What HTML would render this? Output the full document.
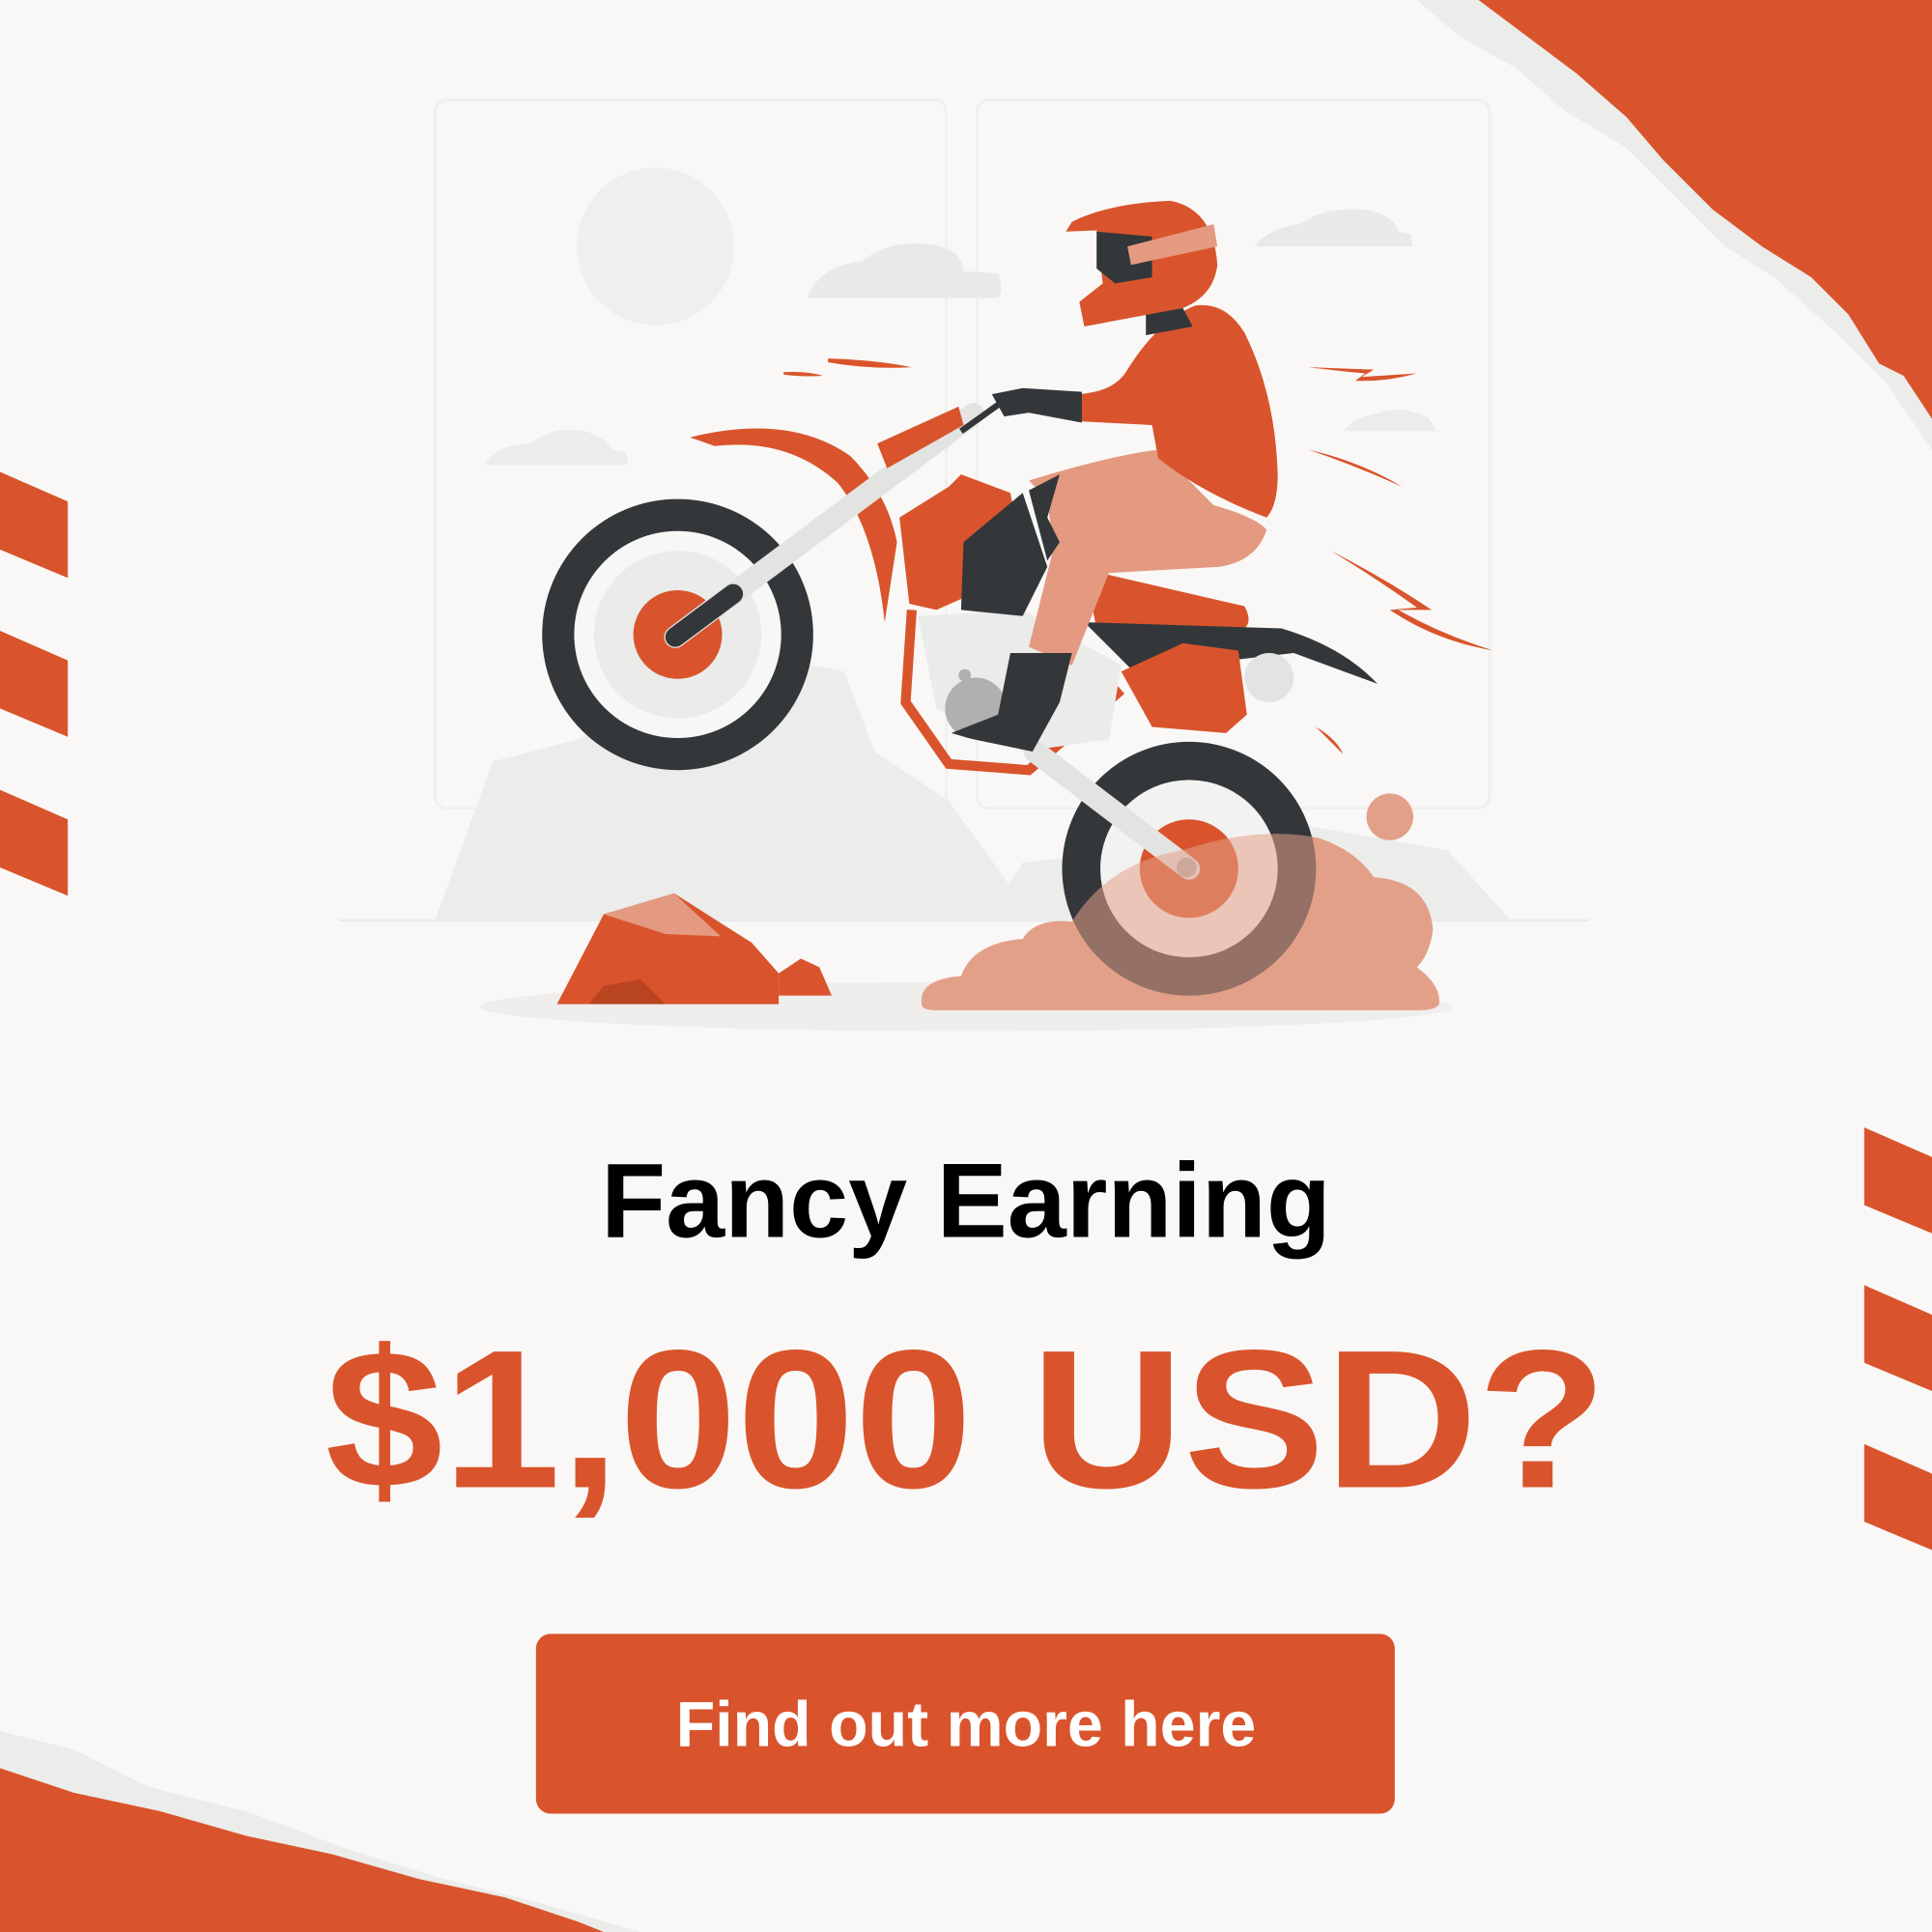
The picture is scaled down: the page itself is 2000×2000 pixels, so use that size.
<!DOCTYPE html>
<html><head><meta charset="utf-8"><style>
html,body{margin:0;padding:0;background:#f9f8f6;}
svg{display:block}
</style></head><body>
<svg width="2000" height="2000" viewBox="0 0 1568 1568" xmlns="http://www.w3.org/2000/svg">
<defs><clipPath id="wc"><circle cx="965" cy="705" r="103"/></clipPath></defs>
<rect width="1568" height="1568" fill="#f9f8f6"/>
<path d="M1150,0 L1185,30 1230,55 1270,90 1320,120 1360,160 1400,200 1440,225 1490,270 1530,310 1568,365 L1568,0Z" fill="#ececea"/>
<path d="M1200,0 L1240,30 1280,60 1320,95 1350,130 1390,170 1430,200 1470,225 1500,255 1525,295 1545,305 1568,340 L1568,0Z" fill="#d9542c"/>
<path d="M0,1405 L60,1420 120,1450 200,1470 280,1500 360,1525 440,1545 520,1568 L0,1568Z" fill="#ececea"/>
<path d="M0,1435 L60,1455 130,1470 200,1490 270,1505 340,1525 410,1540 470,1560 490,1568 L0,1568Z" fill="#d9542c"/>
<g fill="#d9542c">
<path d="M0,383 L55,407 L55,469 L0,446Z"/>
<path d="M0,512 L55,536 L55,598 L0,575Z"/>
<path d="M0,641 L55,665 L55,727 L0,704Z"/>
<path d="M1513,915 L1568,939 L1568,1001 L1513,978Z"/>
<path d="M1513,1043 L1568,1067 L1568,1129 L1513,1106Z"/>
<path d="M1513,1172 L1568,1196 L1568,1258 L1513,1235Z"/>
</g>
<rect x="353" y="81" width="415" height="575" rx="10" fill="none" stroke="#f0efed" stroke-width="2"/>
<rect x="793" y="81" width="416" height="575" rx="10" fill="none" stroke="#f0efed" stroke-width="2"/>
<circle cx="532" cy="200" r="64" fill="#efefed"/>
<path d="M655,242 Q665,215 700,212 Q720,195 750,198 Q780,200 782,220 L810,222 Q815,235 810,242Z" fill="#e9e9e8"/>
<path d="M1018,200 Q1030,185 1055,182 Q1075,168 1105,170 Q1130,172 1135,188 L1145,190 L1146,200Z" fill="#e9e9e8"/>
<path d="M393,377 Q405,360 430,360 Q450,345 475,350 Q492,355 496,365 L508,367 L510,377Z" fill="#ececea"/>
<path d="M1090,350 Q1100,338 1120,335 Q1140,328 1160,340 L1166,350Z" fill="#ececea"/>
<path d="M353,747 L400,618 L470,600 L560,520 L685,545 L710,610 L770,650 L840,747Z" fill="#ececeb"/>
<path d="M800,747 L830,700 L920,690 L1000,660 L1060,670 L1175,690 L1226,747Z" fill="#ececeb"/>
<line x1="275" y1="747" x2="1290" y2="747" stroke="#ebebea" stroke-width="2"/>
<ellipse cx="784" cy="817" rx="395" ry="20" fill="#efeeec"/>
<path d="M452,815 L490,742 L547,725 L610,765 L632,790 L632,815Z" fill="#d9542c"/>
<path d="M490,742 L547,725 L585,760 L540,758Z" fill="#e49a80"/>
<path d="M632,790 L650,778 L665,785 L675,808 L632,808Z" fill="#d9542c"/>
<path d="M478,815 L490,800 L520,795 L540,815Z" fill="#b84420"/>
<path id="dust" d="M748,815 Q745,795 780,792 Q790,765 830,762 Q840,745 870,748 Q900,700 960,690 Q1020,670 1070,680 Q1100,690 1115,712 Q1160,715 1163,755 Q1160,775 1150,785 Q1170,800 1168,815 Q1165,820 1150,820 L760,820 Q748,820 748,815Z" fill="#e3a088"/>
<circle cx="1128" cy="663" r="19" fill="#e3a088"/>
<g fill="#d9542c">
<path d="M672,291 Q710,292 740,298 Q705,300 672,294Z"/>
<path d="M636,302 Q655,301 668,305 Q650,306 636,304Z"/>
<path d="M1062,298 L1115,300 L1105,306 L1150,303 Q1125,310 1100,309 L1108,303 Q1085,301 1062,298Z"/>
<path d="M1062,365 Q1105,375 1138,395 Q1100,378 1062,365Z"/>
<path d="M1080,447 Q1125,470 1162,495 L1135,495 Q1170,515 1212,528 Q1165,520 1128,495 L1150,493 Q1115,468 1080,447Z"/>
<path d="M1068,590 Q1085,600 1090,612 Q1080,602 1068,590Z"/>
</g>
<circle cx="550" cy="515" r="110" fill="#33373a"/>
<circle cx="550" cy="515" r="84" fill="#f7f7f6"/>
<circle cx="550" cy="515" r="68" fill="#ebebea"/>
<circle cx="550" cy="515" r="36" fill="#d9542c"/>
<path d="M560,355 Q640,335 690,370 Q720,400 728,440 L718,505 Q710,430 680,392 Q640,355 580,362Z" fill="#d9542c"/>
<line x1="548" y1="517" x2="790" y2="336" stroke="#e3e3e2" stroke-width="18" stroke-linecap="round"/>
<line x1="548" y1="517" x2="595" y2="482" stroke="#33373a" stroke-width="16" stroke-linecap="round"/>
<line x1="780" y1="350" x2="815" y2="325" stroke="#33373a" stroke-width="5"/>
<path d="M712,360 L778,330 L782,345 L720,380Z" fill="#d9542c"/>
<path d="M740,495 L735,570 L770,620 L835,625 L910,560" fill="none" stroke="#d9542c" stroke-width="8"/>
<path d="M745,500 L830,495 L910,540 L900,600 L830,610 L760,575Z" fill="#ebebea"/>
<circle cx="792" cy="575" r="25" fill="#b0b0b0"/>
<circle cx="783" cy="548" r="5" fill="#b0b0b0"/>
<circle cx="965" cy="705" r="103" fill="#33373a"/>
<circle cx="965" cy="705" r="72" fill="#f2f2f1"/>
<circle cx="965" cy="705" r="40" fill="#d9542c"/>
<line x1="840" y1="610" x2="965" y2="705" stroke="#e3e3e2" stroke-width="18" stroke-linecap="round"/>
<circle cx="963" cy="704" r="8" fill="#b0b0b0"/>
<g clip-path="url(#wc)" opacity="0.55"><use href="#dust"/></g>
<path d="M730,420 L770,395 L780,385 L820,400 L830,450 L805,475 L760,495 L738,490Z" fill="#d9542c"/>
<path d="M880,462 L1010,492 Q1020,510 1000,515 L890,510Z" fill="#d9542c"/>
<path d="M880,505 L1040,510 Q1090,525 1118,555 L1050,530 L920,545Z" fill="#33373a"/>
<path d="M910,545 L960,522 L1005,528 L1012,580 L995,595 L935,590Z" fill="#d9542c"/>
<circle cx="1030" cy="550" r="20" fill="#e3e3e2"/>
<path d="M782,440 L780,495 L830,500 L850,460 L830,400Z" fill="#33373a"/>
<path d="M835,390 Q900,370 940,365 L985,410 Q1020,420 1028,430 Q1020,455 990,460 L900,465 L870,540 L835,525 L855,445 L850,405Z" fill="#e49a80"/>
<path d="M835,398 L860,385 L850,420 L860,440 L850,455Z" fill="#33373a"/>
<path d="M820,530 L870,530 L860,570 L838,610 L790,600 L772,595 L810,580Z" fill="#33373a"/>
<path d="M915,300 Q940,260 970,248 Q995,245 1010,270 Q1035,320 1037,385 Q1037,410 1028,420 Q975,400 940,372 L935,345 L878,342 L875,320 Q905,318 915,300Z" fill="#d9542c"/>
<path d="M805,320 L830,315 L878,318 L878,343 L835,335 L815,338Z" fill="#33373a"/>
<path d="M930,255 L960,250 L968,265 L930,272Z" fill="#33373a"/>
<path d="M870,180 Q900,165 950,163 Q985,170 988,215 Q985,240 960,250 L880,265 L876,245 L895,230 L890,187 L865,188Z" fill="#d9542c"/>
<path d="M890,188 L935,192 L935,225 L905,230 L890,218Z" fill="#33373a"/>
<path d="M915,200 L985,182 L988,200 L918,215Z" fill="#e49a80"/>
<text x="784" y="1004" text-anchor="middle" font-family="Liberation Sans, sans-serif" font-weight="bold" font-size="86" fill="#000">Fancy Earning</text>
<text x="784" y="1207" text-anchor="middle" font-family="Liberation Sans, sans-serif" font-weight="bold" font-size="160" fill="#d9542c" textLength="1040" lengthAdjust="spacingAndGlyphs">$1,000 USD?</text>
<rect x="435" y="1326" width="697" height="146" rx="12" fill="#d9542c"/>
<text x="784" y="1417" text-anchor="middle" font-family="Liberation Sans, sans-serif" font-weight="bold" font-size="52" fill="#fff">Find out more here</text>
</svg>
</body></html>
